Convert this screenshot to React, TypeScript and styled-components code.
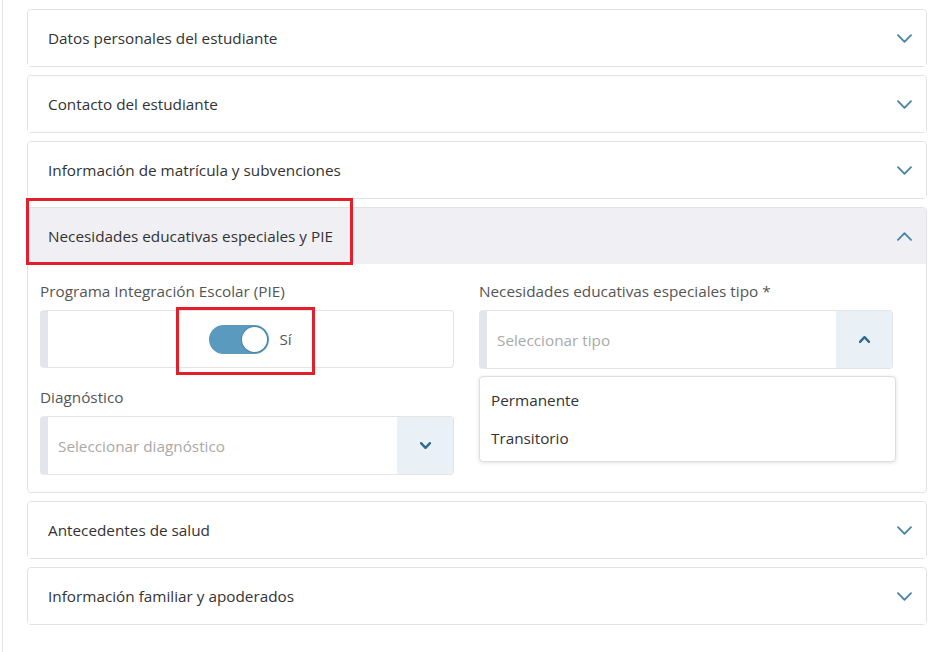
import React from "react";
import styled, { createGlobalStyle } from "styled-components";

const GlobalStyle = createGlobalStyle`
  html, body {
    margin: 0;
    padding: 0;
    background: #ffffff;
    font-family: "Open Sans", "Noto Sans", Arial, sans-serif;
    color: #333;
  }
`;

const Page = styled.div`
  margin-left: 2px;
  border-left: 1px solid #e4e4e4;
  padding: 9px 0 30px 24px;
  min-height: 652px;
  box-sizing: border-box;
`;

const List = styled.div`
  width: 900px;
  display: flex;
  flex-direction: column;
  gap: 8px;
`;

const Card = styled.div`
  position: relative;
  border: 1px solid #e2e2e2;
  border-radius: 4px;
  background: #fff;
`;

const Header = styled.div<{ $open?: boolean }>`
  height: 56px;
  display: flex;
  align-items: center;
  justify-content: space-between;
  padding: 0 14px 0 20px;
  background: ${(p) => (p.$open ? "#f0f0f4" : "#fff")};
  border-radius: 4px 4px 0 0;
  font-size: 15.3px;
  color: #333;
`;

const Body = styled.div`
  display: grid;
  grid-template-columns: 414px 414px;
  column-gap: 25px;
  padding: 17px 0 17px 12px;
`;

const Column = styled.div`
  display: flex;
  flex-direction: column;
  position: relative;
`;

const Label = styled.div<{ $spaced?: boolean }>`
  font-size: 15.3px;
  line-height: 20px;
  color: #555;
  margin-top: ${(p) => (p.$spaced ? "19px" : "0")};
  margin-bottom: 9px;
`;

const Field = styled.div<{ $height?: number }>`
  position: relative;
  height: ${(p) => p.$height ?? 58}px;
  box-sizing: border-box;
  border: 1px solid #e4e4e6;
  border-left: 8px solid #e2e5ec;
  border-radius: 4px;
  display: flex;
  align-items: center;
  background: #fff;
`;

const ToggleWrap = styled.div`
  flex: 1;
  display: flex;
  justify-content: center;
  align-items: center;
  gap: 10px;
  font-size: 15.3px;
  color: #555;
`;

const Track = styled.div`
  width: 60px;
  height: 29px;
  border-radius: 15px;
  background: #5b9abf;
  position: relative;
  box-sizing: border-box;
`;

const Knob = styled.div`
  position: absolute;
  right: 2px;
  top: 2px;
  width: 25px;
  height: 25px;
  border-radius: 50%;
  background: #fff;
  box-shadow: 0 0 0 1px #4a86a8;
`;

const Placeholder = styled.div`
  flex: 1;
  padding-left: 10px;
  font-size: 15.3px;
  color: #a9a9a9;
`;

const SelectButton = styled.div`
  width: 56px;
  align-self: stretch;
  background: #e9f1f7;
  display: flex;
  align-items: center;
  justify-content: center;
  border-radius: 0 3px 3px 0;
`;

const Menu = styled.div`
  position: absolute;
  top: calc(100% + 8px);
  left: -8px;
  width: 415px;
  background: #fff;
  border: 1px solid #dedede;
  border-radius: 4px;
  box-shadow: 0 1px 4px rgba(0, 0, 0, 0.12);
  padding: 4px 0;
  z-index: 2;
`;

const MenuItem = styled.div`
  height: 38px;
  display: flex;
  align-items: center;
  padding-left: 11px;
  font-size: 15.3px;
  color: #333;
`;

const Mark = styled.div`
  position: absolute;
  border: 3px solid #e2202b;
  box-sizing: border-box;
  pointer-events: none;
  z-index: 3;
`;

const HeaderMark = styled(Mark)`
  left: -2px;
  top: -10px;
  width: 327px;
  height: 67px;
`;

const ToggleMark = styled(Mark)`
  left: 128px;
  top: -4px;
  width: 139px;
  height: 68px;
`;

const Chevron = ({ up, small }: { up?: boolean; small?: boolean }) => {
  const w = small ? 11 : 15;
  const h = small ? 7 : 9;
  return (
    <svg width={w} height={h} viewBox={`0 0 ${w} ${h}`}>
      <polyline
        points={
          up
            ? `1,${h - 1.2} ${w / 2},1.2 ${w - 1},${h - 1.2}`
            : `1,1.2 ${w / 2},${h - 1.2} ${w - 1},1.2`
        }
        fill="none"
        stroke={small ? "#2d6b90" : "#4a86a8"}
        strokeWidth={small ? 2.4 : 1.9}
        strokeLinecap="round"
        strokeLinejoin="round"
      />
    </svg>
  );
};

const sections = [
  "Datos personales del estudiante",
  "Contacto del estudiante",
  "Información de matrícula y subvenciones",
];
const after = ["Antecedentes de salud", "Información familiar y apoderados"];

export default function App() {
  return (
    <>
      <GlobalStyle />
      <Page>
        <List>
          {sections.map((s) => (
            <Card key={s}>
              <Header>
                {s}
                <Chevron />
              </Header>
            </Card>
          ))}
          <Card>
            <HeaderMark />
            <Header $open>
              Necesidades educativas especiales y PIE
              <Chevron up />
            </Header>
            <Body>
              <Column>
                <Label>Programa Integración Escolar (PIE)</Label>
                <Field>
                  <ToggleMark />
                  <ToggleWrap>
                    <Track>
                      <Knob />
                    </Track>
                    Sí
                  </ToggleWrap>
                </Field>
                <Label $spaced>Diagnóstico</Label>
                <Field $height={59}>
                  <Placeholder>Seleccionar diagnóstico</Placeholder>
                  <SelectButton>
                    <Chevron small />
                  </SelectButton>
                </Field>
              </Column>
              <Column>
                <Label>Necesidades educativas especiales tipo *</Label>
                <Field $height={59}>
                  <Placeholder>Seleccionar tipo</Placeholder>
                  <SelectButton>
                    <Chevron small up />
                  </SelectButton>
                  <Menu>
                    <MenuItem>Permanente</MenuItem>
                    <MenuItem>Transitorio</MenuItem>
                  </Menu>
                </Field>
              </Column>
            </Body>
          </Card>
          {after.map((s) => (
            <Card key={s}>
              <Header>
                {s}
                <Chevron />
              </Header>
            </Card>
          ))}
        </List>
      </Page>
    </>
  );
}
